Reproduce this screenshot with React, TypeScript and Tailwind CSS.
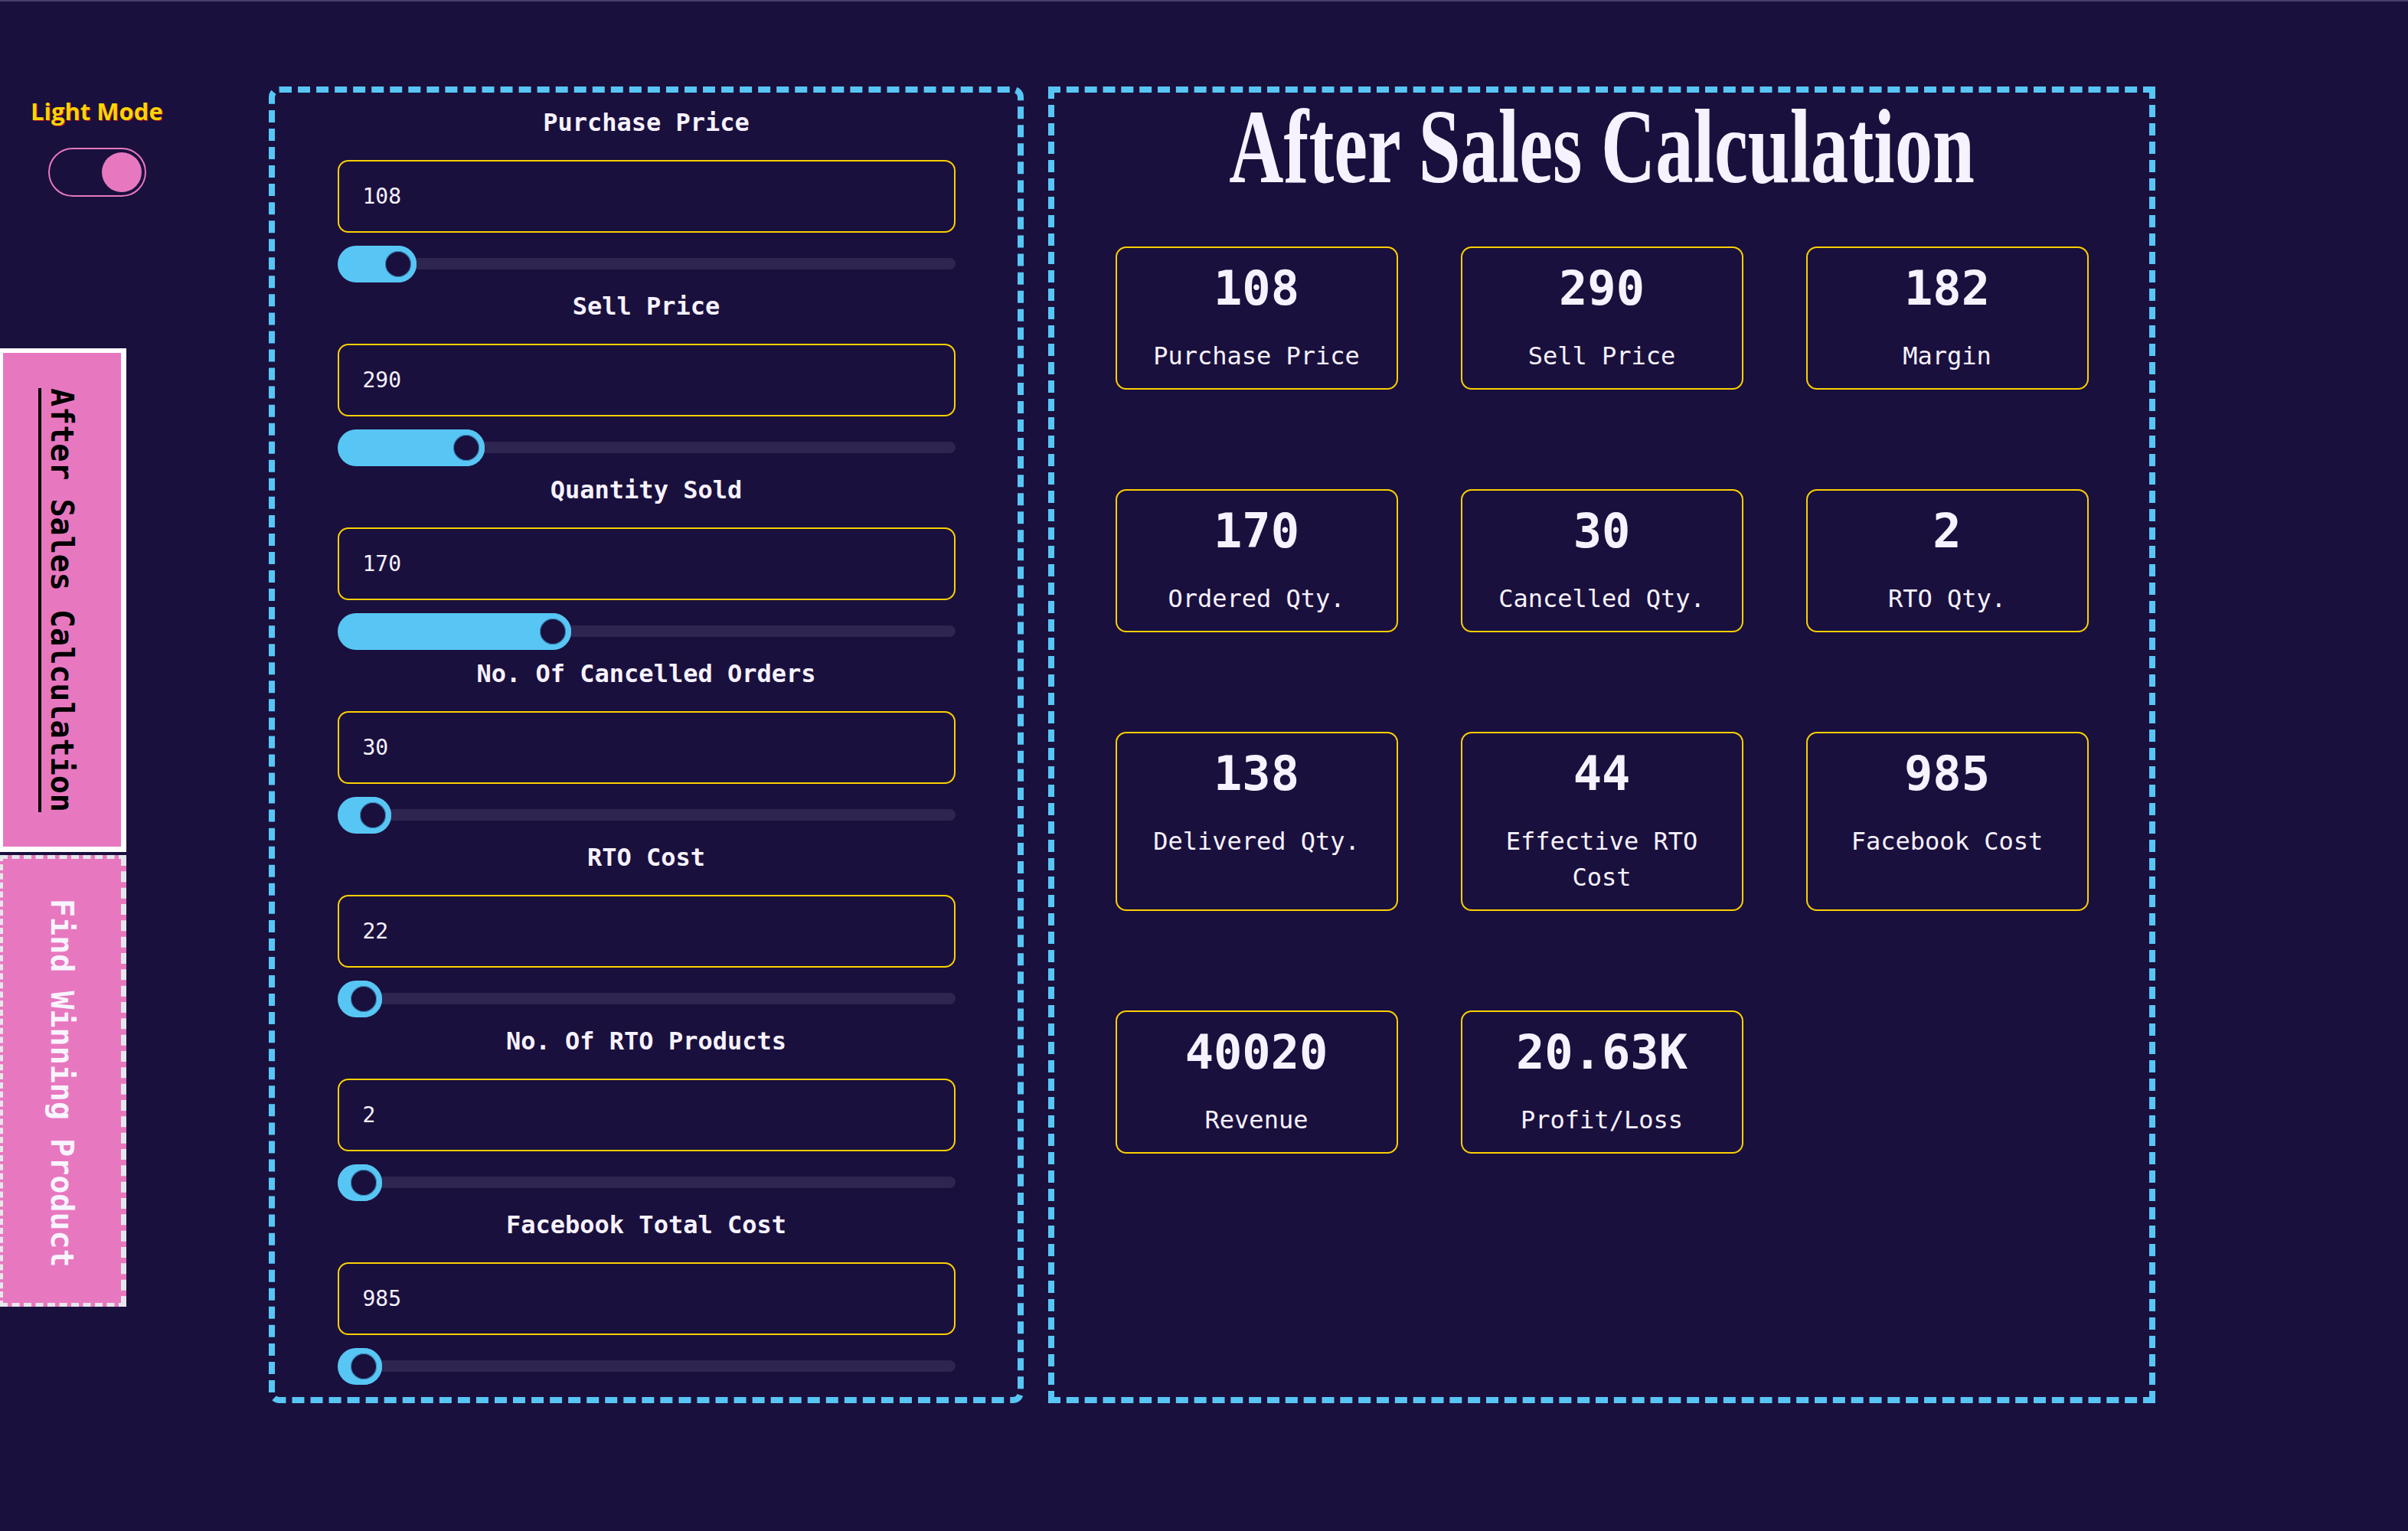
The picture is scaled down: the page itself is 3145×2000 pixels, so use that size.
import React from "react";

const mono = "font-['DejaVu_Sans_Mono','Liberation_Mono',monospace]";

const groups = [
  { label: "Purchase Price", value: "108", left: 55 },
  { label: "Sell Price", value: "290", left: 144 },
  { label: "Quantity Sold", value: "170", left: 257 },
  { label: "No. Of Cancelled Orders", value: "30", left: 22 },
  { label: "RTO Cost", value: "22", left: 10 },
  { label: "No. Of RTO Products", value: "2", left: 10 },
  { label: "Facebook Total Cost", value: "985", left: 10 },
];

const cards = [
  { value: "108", label: "Purchase Price" },
  { value: "290", label: "Sell Price" },
  { value: "182", label: "Margin" },
  { value: "170", label: "Ordered Qty." },
  { value: "30", label: "Cancelled Qty." },
  { value: "2", label: "RTO Qty." },
  { value: "138", label: "Delivered Qty." },
  { value: "44", label: "Effective RTO Cost" },
  { value: "985", label: "Facebook Cost" },
  { value: "40020", label: "Revenue" },
  { value: "20.63K", label: "Profit/Loss" },
];

function Slider({ left }: { left: number }) {
  return (
    <div className="relative mx-auto mt-[17px] h-[48px] w-[807px]">
      <div className="absolute left-0 right-0 top-[16px] h-[15px] rounded-full bg-[#2e2550]" />
      <div
        className="absolute left-0 top-0 h-[48px] rounded-full bg-[#58c6f4]"
        style={{ width: left + 48 }}
      />
      <div
        className="absolute top-0 h-[48px] w-[48px] rounded-full border-[7px] border-[#58c6f4] bg-[#1a103d] shadow-[inset_0_0_0_1px_#3a8fc0]"
        style={{ left }}
      />
    </div>
  );
}

function Group({ label, value, left }: { label: string; value: string; left: number }) {
  return (
    <div className="flex flex-col">
      <div className={`${mono} h-[40px] text-center text-[32px] font-bold leading-[40px] text-[#f6f2ff]`}>
        {label}
      </div>
      <div className="mx-auto mt-[29px] flex h-[95px] w-[807px] items-center rounded-[14px] border-2 border-[#fcd000] pl-[31px]">
        <input
          type="text"
          readOnly
          value={value}
          className={`${mono} w-full bg-transparent text-[28px] text-[#f6f2ff] outline-none`}
        />
      </div>
      <Slider left={left} />
    </div>
  );
}

function Card({ value, label }: { value: string; label: string }) {
  return (
    <div className="flex flex-col items-center rounded-[14px] border-2 border-[#fcd000] px-6 pt-[22px] pb-[18px] text-[#f6f2ff]">
      <div className={`${mono} h-[62px] text-[62px] font-bold leading-[62px]`}>{value}</div>
      <div className={`${mono} mt-[34px] text-center text-[32px] leading-[47px]`}>{label}</div>
    </div>
  );
}

export default function App() {
  return (
    <div className="flex min-h-[2000px] w-full items-start border-t-2 border-[#463e6c] bg-[#1a103d]">
      {/* Sidebar */}
      <div className="flex w-[165px] shrink-0 flex-col pt-[123px]">
        <div className="ml-[40px] h-[40px] whitespace-nowrap font-['Open_Sans',sans-serif] text-[31px] font-bold leading-[40px] text-[#ffd400] [text-shadow:1px_1px_0_#a0162a]">
          Light Mode
        </div>
        <div className="ml-[63px] mt-[28px] flex h-[64px] w-[128px] items-center rounded-full border-2 border-[#e778bf] pl-[68px]">
          <div className="h-[52px] w-[52px] rounded-full bg-[#e778bf]" />
        </div>
        <div className="mt-[198px] flex h-[658px] w-[165px] items-start justify-center border-l-4 border-t-[6px] border-r-[7px] border-b-[7px] border-white bg-[#e778bf] pt-[46px]">
          <span
            className={`${mono} text-[40px] font-bold leading-[40px] text-black underline decoration-[4px] underline-offset-[6px] [text-underline-position:left] [writing-mode:vertical-rl]`}
          >
            After Sales Calculation
          </span>
        </div>
        <div className="mt-[4px] flex h-[590px] w-[165px] items-start justify-center border-l-4 border-y-[5px] border-r-[7px] border-dashed border-[#e5e7eb] bg-[#e778bf] pt-[52px]">
          <span className={`${mono} text-[40px] font-bold leading-[40px] text-[#f8f4ff] [writing-mode:vertical-rl]`}>
            Find Winning Product
          </span>
        </div>
      </div>

      {/* Panels */}
      <div className="ml-[186px] mt-[111px] flex gap-[32px]">
        <div className="flex h-[1720px] w-[986px] flex-col gap-[11px] rounded-[14px] border-[8px] border-dashed border-[#58c6f4] pt-[19px]">
          {groups.map((g) => (
            <Group key={g.label} {...g} />
          ))}
        </div>

        <div className="flex h-[1720px] w-[1446px] flex-col items-center border-[8px] border-dashed border-[#58c6f4]">
          <div className="mt-[3px] h-[137px] whitespace-nowrap text-center">
            <span className="inline-block origin-center scale-x-[0.72] font-['Liberation_Serif',serif] text-[137px] font-bold leading-[137px] text-[#f6f2ff]">
              After Sales Calculation
            </span>
          </div>
          <div className="mt-[61px] grid grid-cols-[repeat(3,369px)] gap-x-[82px] gap-y-[130px]">
            {cards.map((c) => (
              <Card key={c.label} {...c} />
            ))}
          </div>
        </div>
      </div>
    </div>
  );
}
